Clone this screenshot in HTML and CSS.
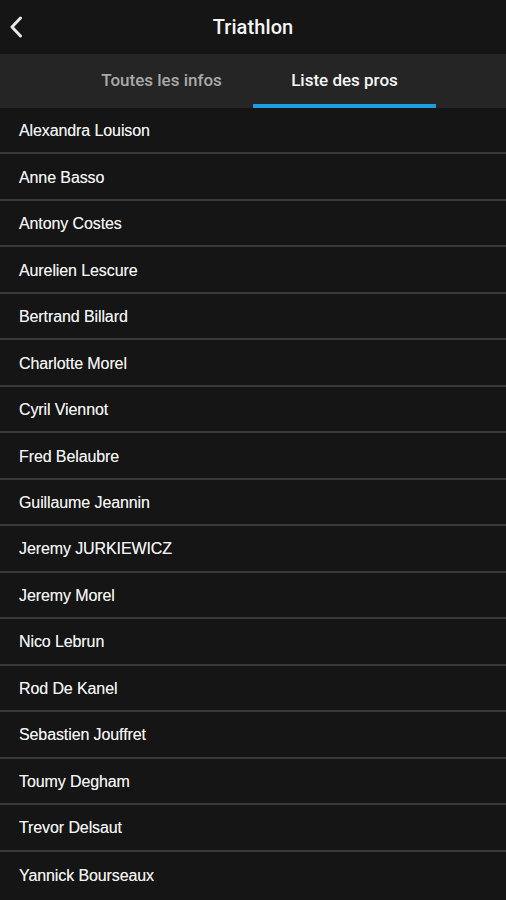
FILE: index.html
```html
<!DOCTYPE html>
<html lang="fr">
<head>
<meta charset="utf-8">
<title>Triathlon</title>
<link rel="stylesheet" href="styles.css">
</head>
<body>
<div class="app">
  <header class="topbar">
    <button class="back" aria-label="Retour">
      <svg width="14" height="22" viewBox="0 0 14 22"><path d="M11.5 2 L3 11 L11.5 20" fill="none" stroke="#e6e6e6" stroke-width="3" stroke-linecap="round" stroke-linejoin="round"/></svg>
    </button>
    <h1 class="title">Triathlon</h1>
  </header>
  <nav class="tabs">
    <div class="tab">Toutes les infos</div>
    <div class="tab active">Liste des pros</div>
  </nav>
  <ul class="list">
    <li class="row">Alexandra Louison</li>
    <li class="row">Anne Basso</li>
    <li class="row">Antony Costes</li>
    <li class="row">Aurelien Lescure</li>
    <li class="row">Bertrand Billard</li>
    <li class="row">Charlotte Morel</li>
    <li class="row">Cyril Viennot</li>
    <li class="row">Fred Belaubre</li>
    <li class="row">Guillaume Jeannin</li>
    <li class="row">Jeremy JURKIEWICZ</li>
    <li class="row">Jeremy Morel</li>
    <li class="row">Nico Lebrun</li>
    <li class="row">Rod De Kanel</li>
    <li class="row">Sebastien Jouffret</li>
    <li class="row">Toumy Degham</li>
    <li class="row">Trevor Delsaut</li>
    <li class="row">Yannick Bourseaux</li>
  </ul>
</div>
</body>
</html>
```
FILE: styles.css
```css
* { box-sizing: border-box; }
html, body { margin: 0; padding: 0; background: #151515; }
body { width: 506px; height: 900px; overflow: hidden; font-family: Roboto, "Liberation Sans", sans-serif; color: #f2f2f2; }
.app { display: flex; flex-direction: column; }
.topbar { height: 54px; background: #151515; display: flex; align-items: center; justify-content: center; position: relative; }
.back { position: absolute; left: 9px; top: 16px; background: none; border: 0; padding: 0; width: 14px; height: 22px; display: flex; }
.title { margin: 0; font-size: 20px; font-weight: 500; color: #f4f4f4; letter-spacing: 0.1px; }
.tabs { height: 54px; background: #252525; display: flex; justify-content: center; }
.tab { width: 183px; display: flex; align-items: center; justify-content: center; font-size: 17px; font-weight: 500; color: #a9a9a9; border-bottom: 4px solid transparent; padding-top: 2px; }
.tab.active { color: #f6f6f6; border-bottom-color: #1f9de2; }
.list { list-style: none; margin: 0; padding: 0; }
.row { height: 46.47px; border-bottom: 2px solid #393939; display: flex; align-items: center; padding-left: 19px; padding-top: 2px; font-family: "Liberation Sans", Arial, sans-serif; font-size: 16px; letter-spacing: -0.1px; color: #f2f2f2; text-shadow: 0 0 0.6px rgba(255,255,255,0.6); }
.row:last-child { border-bottom: 0; }
```
